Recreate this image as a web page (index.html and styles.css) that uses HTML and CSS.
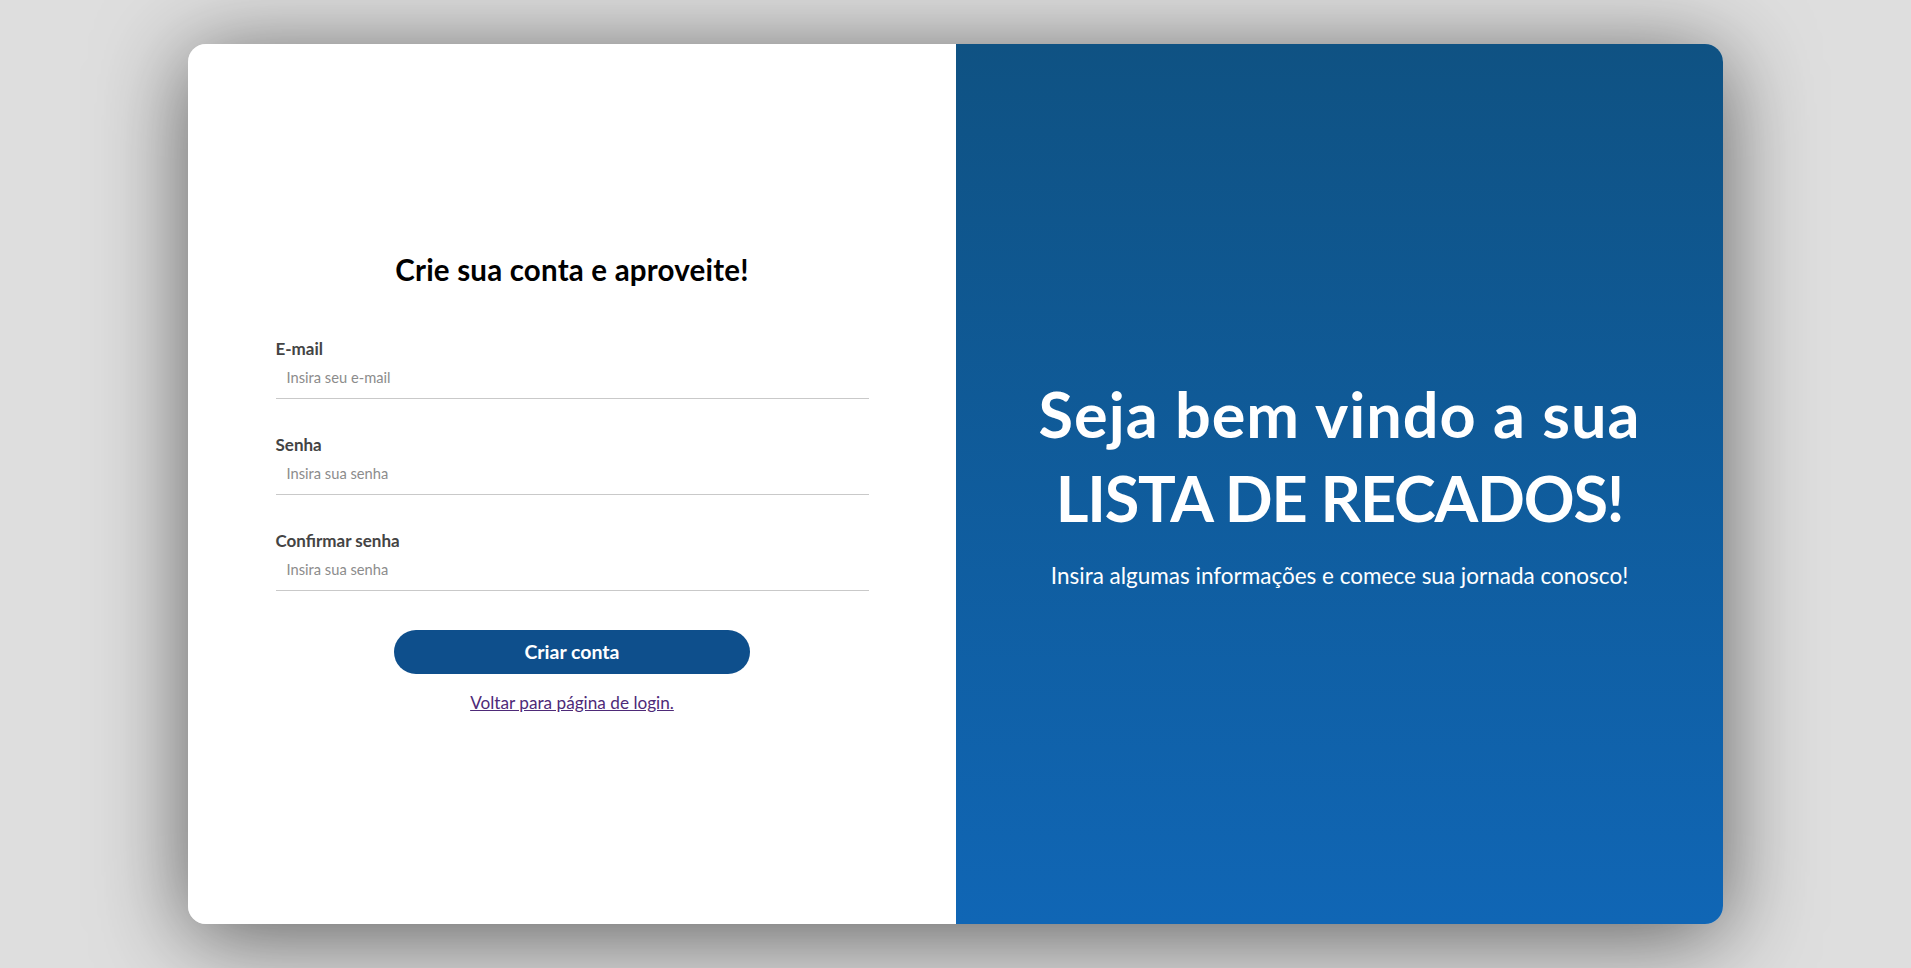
FILE: index.html
```html
<!DOCTYPE html>
<html lang="pt-BR">
<head>
<meta charset="utf-8">
<title>Criar conta</title>
<link rel="stylesheet" href="styles.css">
</head>
<body>
<main class="card">
  <section class="panel-left">
    <form class="form">
      <h1 class="form-title">Crie sua conta e aproveite!</h1>
      <div class="field">
        <label class="field-label">E-mail</label>
        <input class="field-input" type="email" placeholder="Insira seu e-mail">
      </div>
      <div class="field">
        <label class="field-label">Senha</label>
        <input class="field-input" type="password" placeholder="Insira sua senha">
      </div>
      <div class="field field-last">
        <label class="field-label">Confirmar senha</label>
        <input class="field-input" type="password" placeholder="Insira sua senha">
      </div>
      <button class="btn" type="button">Criar conta</button>
      <a class="back-link" href="#">Voltar para página de login.</a>
    </form>
  </section>
  <section class="panel-right">
    <h2 class="welcome"><span class="welcome-line1">Seja bem vindo a sua</span><span class="welcome-line2">LISTA DE RECADOS!</span></h2>
    <p class="welcome-sub">Insira algumas informações e comece sua jornada conosco!</p>
  </section>
</main>
</body>
</html>
```
FILE: styles.css
```css
* { box-sizing: border-box; }
html, body { height: 100%; }
body {
  margin: 0;
  background: #dedede;
  font-family: "Lato", "Noto Sans", sans-serif;
  display: flex;
  align-items: center;
  justify-content: center;
}
.card {
  width: 1535px;
  height: 880px;
  display: flex;
  border-radius: 18px;
  overflow: hidden;
  box-shadow: 0 12px 90px rgba(0,0,0,0.58);
}
.panel-left {
  flex: 0 0 768px;
  background: #fff;
  display: flex;
  align-items: center;
  justify-content: center;
}
.form {
  width: 593px;
  display: flex;
  flex-direction: column;
  align-items: center;
  margin-top: -4px;
}
.form-title {
  margin: 0 0 51px;
  font-size: 29.5px;
  font-weight: 700;
  color: #000;
  letter-spacing: 0.2px;
}
.field {
  width: 100%;
  display: flex;
  flex-direction: column;
  margin-bottom: 35px;
}
.field-last { margin-bottom: 39px; }
.field-label {
  font-size: 17px;
  font-weight: 700;
  color: #444;
  margin-bottom: 5px;
}
.field-input {
  border: none;
  border-bottom: 1px solid #c9c9c9;
  outline: none;
  padding: 4px 11px 12px;
  font-family: inherit;
  font-size: 14.7px;
  color: #333;
  background: transparent;
}
.field-input::placeholder { color: #8c8c8c; }
.btn {
  width: 356px;
  height: 44px;
  border: none;
  border-radius: 22px;
  background: #0e4f8c;
  color: #fff;
  font-family: inherit;
  font-size: 19.5px;
  font-weight: 700;
}
.back-link {
  margin-top: 18px;
  font-size: 17.2px;
  color: #4e2a78;
  text-decoration: underline;
}
.panel-right {
  flex: 1;
  background: linear-gradient(180deg, #0f5283 0%, #1066b5 100%);
  color: #fff;
  display: flex;
  flex-direction: column;
  align-items: center;
  justify-content: center;
  text-align: center;
  padding-bottom: 8px;
}
.welcome {
  margin: 0;
  font-size: 63px;
  line-height: 84px;
  font-weight: 700;
  display: flex;
  flex-direction: column;
  align-items: center;
}
.welcome-line1 { letter-spacing: 1px; }
.welcome-line2 { letter-spacing: -1.2px; }
.welcome-sub {
  margin: 22px 0 0;
  font-size: 22.5px;
  font-weight: 400;
}
```
